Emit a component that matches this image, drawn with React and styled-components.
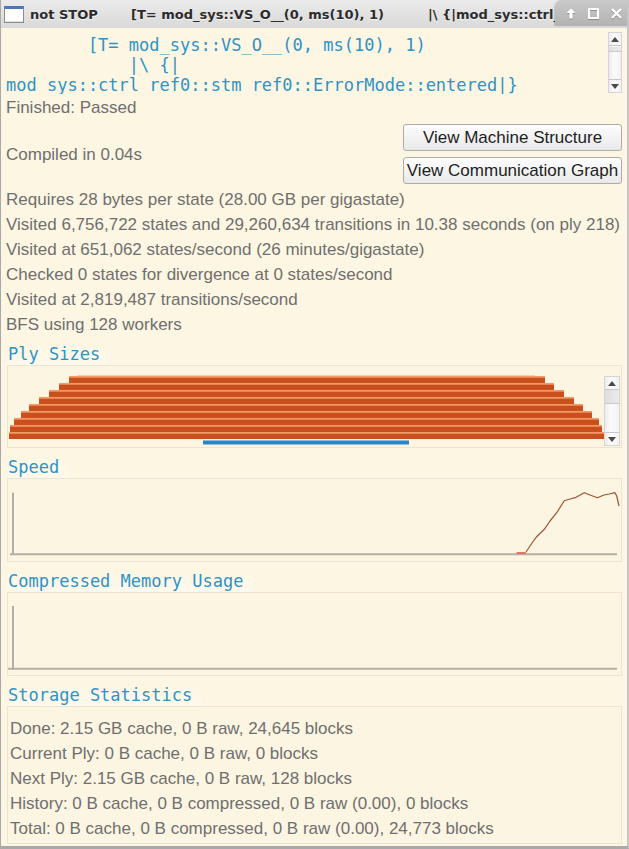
import React from "react";
import styled, { createGlobalStyle } from "styled-components";

const GlobalStyle = createGlobalStyle`
  html, body {
    margin: 0;
    padding: 0;
    background: #fdf6e3;
  }
  * {
    box-sizing: border-box;
  }
`;

const stats = [
  "Requires 28 bytes per state (28.00 GB per gigastate)",
  "Visited 6,756,722 states and 29,260,634 transitions in 10.38 seconds (on ply 218)",
  "Visited at 651,062 states/second (26 minutes/gigastate)",
  "Checked 0 states for divergence at 0 states/second",
  "Visited at 2,819,487 transitions/second",
  "BFS using 128 workers",
];

const storage = [
  "Done: 2.15 GB cache, 0 B raw, 24,645 blocks",
  "Current Ply: 0 B cache, 0 B raw, 0 blocks",
  "Next Ply: 2.15 GB cache, 0 B raw, 128 blocks",
  "History: 0 B cache, 0 B compressed, 0 B raw (0.00), 0 blocks",
  "Total: 0 B cache, 0 B compressed, 0 B raw (0.00), 24,773 blocks",
];

// ply bars: [left, right] in page px
const plyBars = [
  [69, 545],
  [59, 554],
  [49, 564],
  [39, 574],
  [29, 583],
  [21, 592],
  [14, 599],
  [10, 602],
  [9, 606],
];

const speedPoints = [
  [518, 73],
  [524, 64],
  [528.7, 57.7],
  [536.3, 50.3],
  [542, 42],
  [548.7, 33.7],
  [556.3, 21.7],
  [562, 20],
  [568, 18.3],
  [576.3, 13.7],
  [582.7, 16.3],
  [589.3, 18.7],
  [596, 16],
  [601.3, 15],
  [607, 13.7],
  [608.7, 17],
  [611, 27],
];

const App = () => {
  return (
    <>
      <GlobalStyle />
      <Window>
        <TitleBar>
          <WinIcon />
          <TitleSeg $width={101}>not STOP</TitleSeg>
          <TitleSeg $width={297}>[T= mod_sys::VS_O__(0, ms(10), 1)</TitleSeg>
          <TitleSeg>|\ {"{"}|mod_sys::ctrl_ref0::stm_ref0::ErrorMode::entered|{"}"}</TitleSeg>
          <WinButtons>
            <svg width="10" height="11" viewBox="0 0 10 11">
              <path d="M5 0.5 L9.5 5 L6.6 5 L6.6 10.5 L3.4 10.5 L3.4 5 L0.5 5 Z" fill="#fff" />
            </svg>
            <svg width="11" height="11" viewBox="0 0 11 11">
              <rect x="1" y="1" width="9" height="9" fill="none" stroke="#fff" strokeWidth="2" />
            </svg>
            <svg width="11" height="11" viewBox="0 0 11 11">
              <path d="M1 1 L10 10 M10 1 L1 10" stroke="#fff" strokeWidth="2.4" />
            </svg>
          </WinButtons>
        </TitleBar>

        <CodeBox>
          <CodeText>{`        [T= mod_sys::VS_O__(0, ms(10), 1)
            |\\ {|
mod_sys::ctrl_ref0::stm_ref0::ErrorMode::entered|}`}</CodeText>
          <VScroll $height={61} $thumb={5} $thumbTop={1} $mt={4} $mr={5} />
        </CodeBox>

        <Info>
          <Line>Finished: Passed</Line>
          <ActionRow>
            <Line>Compiled in 0.04s</Line>
            <ButtonStack>
              <Button>View Machine Structure</Button>
              <Button>View Communication Graph</Button>
            </ButtonStack>
          </ActionRow>
          <Stats>
            {stats.map((s) => (
              <Line key={s}>{s}</Line>
            ))}
          </Stats>
        </Info>

        <SectionList>
          <Section>
            <Header>
              <HeaderLabel>Ply Sizes</HeaderLabel>
            </Header>
            <ChartPanel $height={83}>
              <svg width="596" height="81" viewBox="0 0 596 81">
                <rect x={69} y={9.5} width={458} height={1.5} fill="#f6a77c" />
                {plyBars.map(([l, r], i) => (
                  <g key={i}>
                    <rect x={l - 8} y={10 + i * 7} width={r - l} height={7} fill="#f4996a" />
                    <rect x={l - 8} y={11.7 + i * 7} width={r - l} height={5.3} fill="#c94f1d" />
                  </g>
                ))}
                <rect x={195} y={74} width={206} height={4.5} fill="#2b84c6" />
                <rect x={195} y={74} width={206} height={1} fill="#7cc0ea" />
              </svg>
              <VScroll $height={70} $thumb={14} $thumbTop={0} $mb={1} $w={16} />
            </ChartPanel>
          </Section>

          <Section>
            <Header>
              <HeaderLabel>Speed</HeaderLabel>
            </Header>
            <ChartPanel $height={84}>
              <svg width="613" height="82" viewBox="0 0 613 82">
                <line x1="5" y1="13.7" x2="5" y2="76" stroke="#b3b0a2" strokeWidth="2" />
                <line x1="2" y1="75.3" x2="609" y2="75.3" stroke="#b3b0a2" strokeWidth="2" />
                <line x1="508.7" y1="74" x2="518" y2="74" stroke="#e27462" strokeWidth="2" />
                <polyline
                  points={speedPoints.map((p) => p.join(",")).join(" ")}
                  fill="none"
                  stroke="#9e5536"
                  strokeWidth="1.2"
                  strokeLinejoin="round"
                />
              </svg>
            </ChartPanel>
          </Section>

          <Section>
            <Header>
              <HeaderLabel>Compressed Memory Usage</HeaderLabel>
            </Header>
            <ChartPanel $height={84}>
              <svg width="613" height="82" viewBox="0 0 613 82">
                <line x1="5" y1="13" x2="5" y2="77" stroke="#b3b0a2" strokeWidth="2" />
                <line x1="0" y1="75.7" x2="609" y2="75.7" stroke="#b3b0a2" strokeWidth="2" />
              </svg>
            </ChartPanel>
          </Section>

          <Section>
            <Header>
              <HeaderLabel>Storage Statistics</HeaderLabel>
            </Header>
            <StoragePanel>
              {storage.map((s) => (
                <Line key={s}>{s}</Line>
              ))}
            </StoragePanel>
          </Section>
        </SectionList>
      </Window>
    </>
  );
};

const VScroll = ({ $height, $thumb, $thumbTop, $mt = 0, $mr = 0, $mb = 0, $w = 14 }) => (
  <ScrollBar $height={$height} $mt={$mt} $mr={$mr} $mb={$mb} $w={$w}>
    <ScrollBtn>
      <ArrowUp />
    </ScrollBtn>
    <ScrollTrack>
      <Thumb $height={$thumb} $top={$thumbTop} />
    </ScrollTrack>
    <ScrollBtn $bottom>
      <ArrowDown />
    </ScrollBtn>
  </ScrollBar>
);

export default App;

const Window = styled.div`
  width: 629px;
  height: 849px;
  overflow: hidden;
  display: flex;
  flex-direction: column;
  background: #fdf6e3;
  border-left: 1px solid #a9a9a9;
  border-right: 2px solid #c6c6c6;
  border-bottom: 3px solid #a9a9a9;
`;

const TitleBar = styled.div`
  height: 28px;
  flex-shrink: 0;
  display: flex;
  align-items: center;
  margin-left: -1px;
  margin-right: -2px;
  background: linear-gradient(#ebebeb, #d9d9d9);
  font: bold 13px "DejaVu Sans", sans-serif;
  color: #2b2b2b;
  text-shadow: 0 1px 0 #f6f6f6;
  white-space: nowrap;
`;

const WinIcon = styled.div`
  width: 20px;
  height: 17px;
  margin: 0 6px 0 4px;
  background: #fff;
  border: 1px solid #8d8d8d;
  border-top: 3px solid #4a76bd;
  box-shadow: inset 0 -1px 0 #e0e0e0;
`;

const TitleSeg = styled.div`
  flex: ${(p) => (p.$width ? `0 0 ${p.$width}px` : "1 1 0")};
  min-width: 0;
  overflow: hidden;
`;

const WinButtons = styled.div`
  flex: 0 0 74px;
  align-self: flex-start;
  height: 26px;
  display: flex;
  align-items: center;
  gap: 12px;
  padding-left: 11px;
  background: linear-gradient(#c9c9c9, #b3b3b3);
  border-top-left-radius: 7px;
  box-shadow: -1px 0 1px rgba(0, 0, 0, 0.15);

  svg {
    filter: drop-shadow(0 1px 0 rgba(0, 0, 0, 0.25));
  }
`;

const CodeBox = styled.div`
  height: 67px;
  flex-shrink: 0;
  display: flex;
  align-items: flex-start;
`;

const CodeText = styled.pre`
  flex: 1;
  height: 66px;
  margin: 0;
  padding: 7px 0 0 5px;
  overflow: hidden;
  font: 17px/20px "DejaVu Sans Mono", monospace;
  color: #2f93c6;
`;

const ScrollBar = styled.div`
  width: ${(p) => p.$w}px;
  height: ${(p) => p.$height}px;
  margin: ${(p) => `${p.$mt}px ${p.$mr}px ${p.$mb}px 0`};
  flex-shrink: 0;
  display: flex;
  flex-direction: column;
  background: linear-gradient(to right, #ececec, #fbfbfb 40%, #f2f2f2);
  border: 1px solid #d5d5d5;
`;

const ScrollBtn = styled.div`
  height: 13px;
  flex-shrink: 0;
  display: flex;
  align-items: center;
  justify-content: center;
  border-${(p) => (p.$bottom ? "top" : "bottom")}: 1px solid #c8c8c8;
`;

const ScrollTrack = styled.div`
  flex: 1;
  position: relative;
`;

const Thumb = styled.div`
  height: ${(p) => p.$height}px;
  margin-top: ${(p) => p.$top}px;
  background: linear-gradient(to right, #dedede, #ebebeb);
  border-bottom: 1px solid #c8c8c8;
`;

const ArrowUp = styled.div`
  width: 0;
  height: 0;
  border-left: 4px solid transparent;
  border-right: 4px solid transparent;
  border-bottom: 5px solid #4a4a4a;
`;

const ArrowDown = styled(ArrowUp)`
  border-bottom: none;
  border-top: 5px solid #4a4a4a;
`;

const Info = styled.div`
  flex-shrink: 0;
  padding: 0 5px 0 5px;
  font: 17px/25px "Liberation Sans", Arial, sans-serif;
  color: #6f6f6f;
`;

const Line = styled.div`
  height: 25px;
  white-space: nowrap;
`;

const ActionRow = styled.div`
  display: flex;
  align-items: center;
  justify-content: space-between;
  margin-top: 4px;
`;

const ButtonStack = styled.div`
  display: flex;
  flex-direction: column;
  gap: 6px;
`;

const Button = styled.button`
  width: 219px;
  height: 27px;
  padding: 0;
  font: 17px "Liberation Sans", Arial, sans-serif;
  color: #1e1e1e;
  background: linear-gradient(#fdfdfd, #e9e9e9);
  border: 1px solid #ababab;
  border-radius: 3px;
  white-space: nowrap;
`;

const Stats = styled.div`
  margin-top: 3px;
`;

const SectionList = styled.div`
  display: flex;
  flex-direction: column;
  gap: 9px;
  padding: 7px 5px 0 6px;
`;

const Section = styled.section`
  display: flex;
  flex-direction: column;
  gap: 1px;
`;

const Header = styled.div`
  height: 20px;
  font: 17px/20px "DejaVu Sans Mono", monospace;
  color: #2f93c6;
`;

const HeaderLabel = styled.span`
  display: inline-block;
  height: 21px;
  padding: 0 9px 0 1px;
  background: linear-gradient(rgba(255, 255, 255, 0), rgba(255, 255, 255, 0.35));
`;

const Panel = styled.div`
  background: #fcf5e2;
  border: 1px solid #ede5d1;
`;

const ChartPanel = styled(Panel)`
  height: ${(p) => p.$height}px;
  display: flex;
  align-items: flex-end;

  svg {
    display: block;
    flex-shrink: 0;
    align-self: flex-start;
  }
`;

const StoragePanel = styled(Panel)`
  height: 138px;
  padding: 9px 0 0 2px;
  font: 17px/25px "Liberation Sans", Arial, sans-serif;
  color: #6f6f6f;
`;
